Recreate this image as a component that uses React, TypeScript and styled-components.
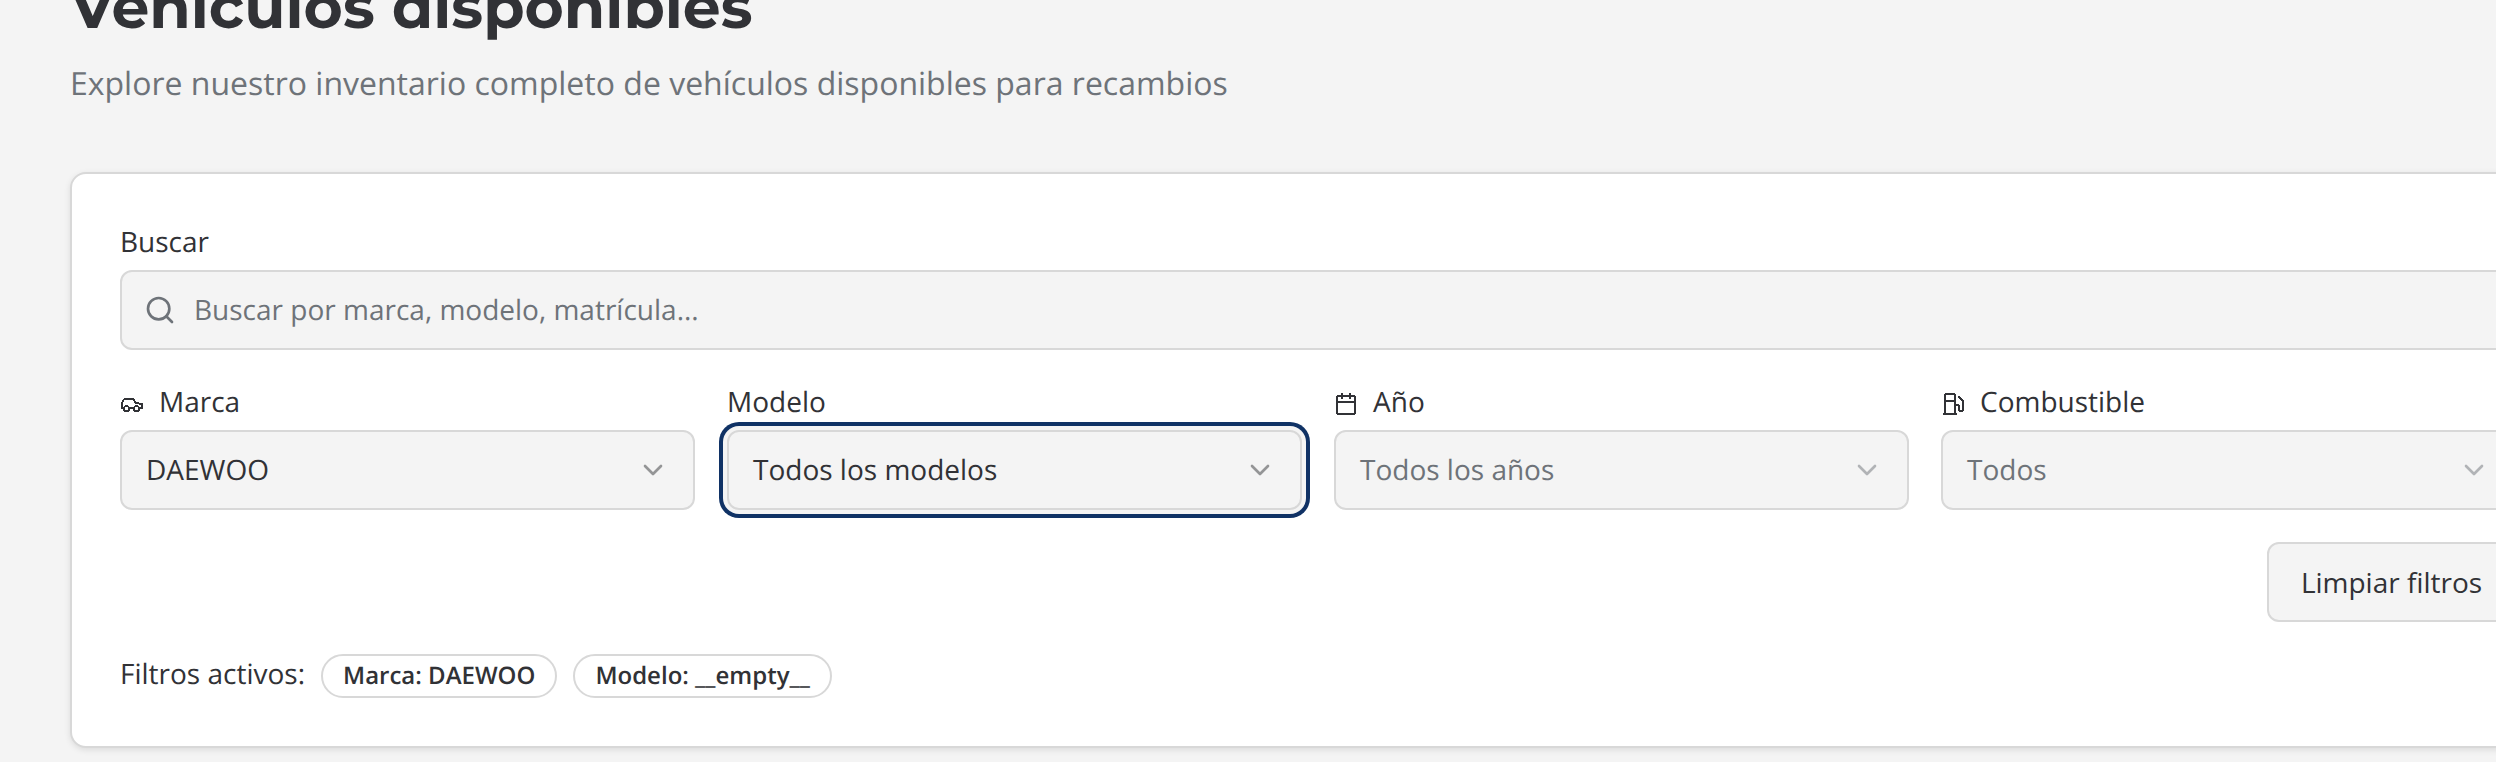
import React from 'react';
import styled, { createGlobalStyle } from 'styled-components';

const GlobalStyle = createGlobalStyle`
  *, *::before, *::after { box-sizing: border-box; }
  html { overflow: hidden; }
  body {
    margin: 0;
    height: 762px;
    overflow: hidden;
    background: #f4f4f4;
    color: #313236;
    font-family: 'Open Sans', 'Noto Sans', sans-serif;
    font-size: 28px;
    line-height: 40px;
    text-rendering: geometricPrecision;
  }
`;

const Page = styled.main`
  width: 2566px;
  height: 762px;
  padding-left: 70px;
  overflow: hidden;
`;

const Title = styled.h1`
  margin: -32px 0 0;
  height: 80px;
  font-family: Montserrat, Inter, sans-serif;
  font-size: 60px;
  font-weight: 700;
  line-height: 80px;
  white-space: nowrap;
`;

const Subtitle = styled.p`
  margin: 8px 0 60px;
  font-size: 32px;
  line-height: 56px;
  color: #6e7379;
`;

const Card = styled.section`
  display: flex;
  flex-direction: column;
  gap: 32px;
  height: 576px;
  padding: 48px;
  background: #fff;
  border: 2px solid #d8d8d8;
  border-radius: 16px;
  box-shadow: 0 2px 6px rgba(0, 0, 0, 0.1);
`;

const Field = styled.div`
  display: flex;
  flex-direction: column;
  gap: 8px;
`;

const Label = styled.label`
  display: flex;
  align-items: center;
  height: 40px;
  svg { margin: 4px 15px 0 0; shape-rendering: crispEdges; }
`;

const SearchBox = styled.div`
  display: flex;
  align-items: center;
  gap: 18px;
  height: 80px;
  padding: 0 22px;
  border: 2px solid #d8d8d8;
  border-radius: 12px;
  background: #f4f4f4;
  color: #6e7379;
`;

const Columns = styled.div`
  display: grid;
  grid-template-columns: repeat(4, 1fr);
  gap: 32px;
`;

const Select = styled.div<{ $muted?: boolean; $focused?: boolean }>`
  display: flex;
  align-items: center;
  justify-content: space-between;
  height: 80px;
  padding: 0 24px;
  border: 2px solid #d8d8d8;
  border-radius: 12px;
  background: #f4f4f4;
  color: ${(p) => (p.$muted ? '#6e7379' : '#313236')};
  box-shadow: ${(p) => (p.$focused ? '0 0 0 4px #f4f4f4, 0 0 0 8px #103265' : 'none')};
  svg { color: ${(p) => (p.$muted ? '#b1b3b6' : '#949596')}; }
`;

const Actions = styled.div`
  display: flex;
  justify-content: flex-end;
`;

const ClearButton = styled.button`
  width: 249px;
  height: 80px;
  padding: 0;
  border: 2px solid #d8d8d8;
  border-radius: 12px;
  background: #f4f4f4;
  color: inherit;
  font: inherit;
`;

const ActiveFilters = styled.div`
  display: flex;
  align-items: center;
  height: 44px;
  gap: 16px;
`;

const Caption = styled.span`
  height: 44px;
  line-height: 40px;
`;

const Chip = styled.span`
  height: 44px;
  padding: 0 20px;
  border: 2px solid #d8d8d8;
  border-radius: 22px;
  font-size: 24px;
  font-weight: 600;
  line-height: 39px;
  white-space: nowrap;
`;

const stroke = {
  fill: 'none',
  stroke: 'currentColor',
  strokeWidth: 2,
  strokeLinecap: 'round' as const,
  strokeLinejoin: 'round' as const,
};

const SearchIcon = () => (
  <svg width="32" height="32" viewBox="0 0 24 24" {...stroke}>
    <circle cx="11" cy="11" r="8" />
    <path d="m21 21-4.3-4.3" />
  </svg>
);

const ChevronIcon = () => (
  <svg width="32" height="32" viewBox="0 0 24 24" {...stroke}>
    <path d="m6 9 6 6 6-6" />
  </svg>
);

const CarIcon = () => (
  <svg width="24" height="24" viewBox="0 0 24 24" {...stroke}>
    <path d="M14 16H9m10 0h3v-3.15a1 1 0 0 0-.84-.99L16 11l-2.7-3.6a1 1 0 0 0-.8-.4H5.24a2 2 0 0 0-1.8 1.1l-.8 1.63A6 6 0 0 0 2 12.42V16h2" />
    <circle cx="6.5" cy="16.5" r="2.5" />
    <circle cx="16.5" cy="16.5" r="2.5" />
  </svg>
);

const CalendarIcon = () => (
  <svg width="24" height="24" viewBox="0 0 24 24" {...stroke}>
    <rect x="3" y="4" width="18" height="18" rx="2" />
    <path d="M8 2v4M16 2v4M3 10h18" />
  </svg>
);

const FuelIcon = () => (
  <svg width="24" height="24" viewBox="0 0 24 24" {...stroke}>
    <path d="M3 22h12M4 9h10M14 22V4a2 2 0 0 0-2-2H6a2 2 0 0 0-2 2v18" />
    <path d="M14 13h2a2 2 0 0 1 2 2v2a2 2 0 0 0 4 0V9.83a2 2 0 0 0-.59-1.42L18 5" />
  </svg>
);

const filters = [
  { label: 'Marca', value: 'DAEWOO', icon: <CarIcon /> },
  { label: 'Modelo', value: 'Todos los modelos', focused: true },
  { label: 'Año', value: 'Todos los años', icon: <CalendarIcon />, muted: true },
  { label: 'Combustible', value: 'Todos', icon: <FuelIcon />, muted: true },
];

export default function App() {
  return (
    <>
      <GlobalStyle />
      <Page>
        <Title>Vehículos disponibles</Title>
        <Subtitle>Explore nuestro inventario completo de vehículos disponibles para recambios</Subtitle>
        <Card>
          <Field>
            <Label>Buscar</Label>
            <SearchBox>
              <SearchIcon />
              Buscar por marca, modelo, matrícula...
            </SearchBox>
          </Field>
          <Columns>
            {filters.map((f) => (
              <Field key={f.label}>
                <Label>{f.icon}{f.label}</Label>
                <Select $muted={f.muted} $focused={f.focused}>
                  {f.value}
                  <ChevronIcon />
                </Select>
              </Field>
            ))}
          </Columns>
          <Actions>
            <ClearButton>Limpiar filtros</ClearButton>
          </Actions>
          <ActiveFilters>
            <Caption>Filtros activos:</Caption>
            <Chip>Marca: DAEWOO</Chip>
            <Chip>Modelo: __empty__</Chip>
          </ActiveFilters>
        </Card>
      </Page>
    </>
  );
}
